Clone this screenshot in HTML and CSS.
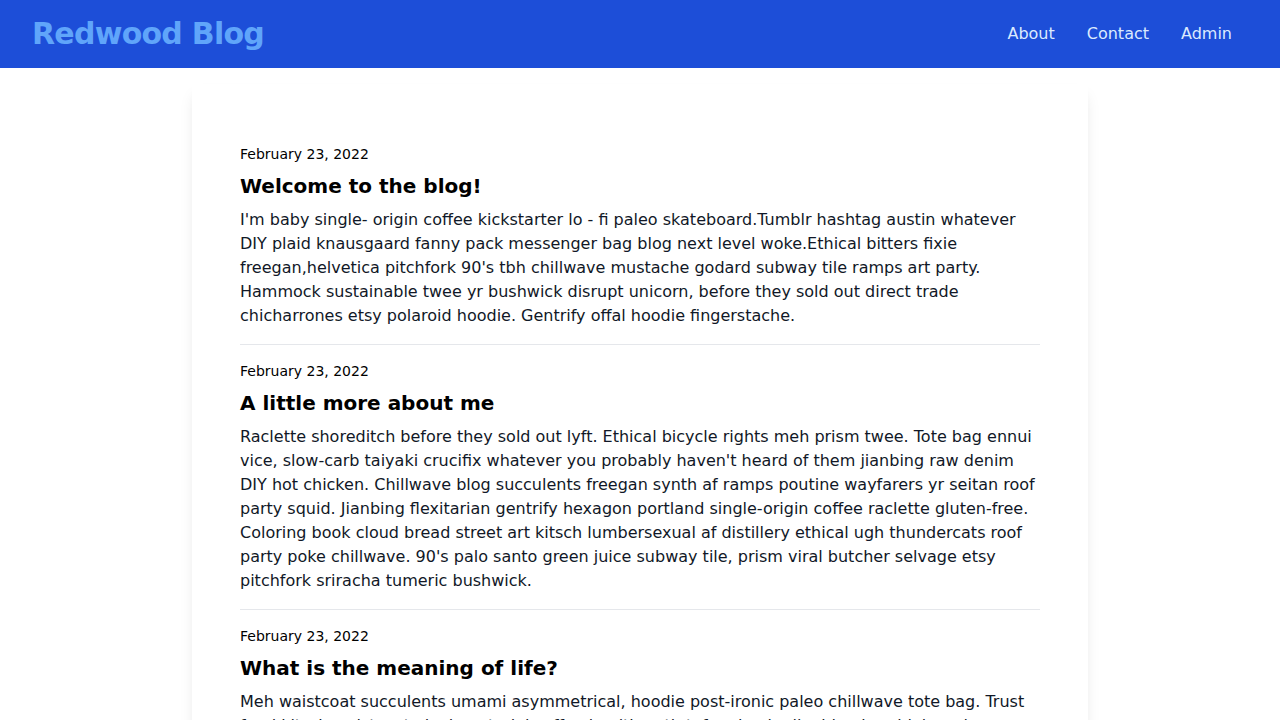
FILE: index.html
```html
<!DOCTYPE html>
<html lang="en">
<head>
<meta charset="utf-8">
<title>Redwood Blog</title>
<link rel="stylesheet" href="styles.css">
</head>
<body>
<header class="site-header">
  <h1 class="brand"><a href="#">Redwood Blog</a></h1>
  <nav class="nav">
    <a href="#" class="nav-link">About</a>
    <a href="#" class="nav-link">Contact</a>
    <a href="#" class="nav-link">Admin</a>
  </nav>
</header>
<main class="card">
  <article class="post">
    <div class="date">February 23, 2022</div>
    <h2 class="title">Welcome to the blog!</h2>
    <p class="body">I'm baby single- origin coffee kickstarter lo - fi paleo skateboard.Tumblr hashtag austin whatever DIY plaid knausgaard fanny pack messenger bag blog next level woke.Ethical bitters fixie freegan,helvetica pitchfork 90's tbh chillwave mustache godard subway tile ramps art party. Hammock sustainable twee yr bushwick disrupt unicorn, before they sold out direct trade chicharrones etsy polaroid hoodie. Gentrify offal hoodie fingerstache.</p>
  </article>
  <article class="post">
    <div class="date">February 23, 2022</div>
    <h2 class="title">A little more about me</h2>
    <p class="body">Raclette shoreditch before they sold out lyft. Ethical bicycle rights meh prism twee. Tote bag ennui vice, slow-carb taiyaki crucifix whatever you probably haven't heard of them jianbing raw denim DIY hot chicken. Chillwave blog succulents freegan synth af ramps poutine wayfarers yr seitan roof party squid. Jianbing flexitarian gentrify hexagon portland single-origin coffee raclette gluten-free. Coloring book cloud bread street art kitsch lumbersexual af distillery ethical ugh thundercats roof party poke chillwave. 90's palo santo green juice subway tile, prism viral butcher selvage etsy pitchfork sriracha tumeric bushwick.</p>
  </article>
  <article class="post">
    <div class="date">February 23, 2022</div>
    <h2 class="title">What is the meaning of life?</h2>
    <p class="body">Meh waistcoat succulents umami asymmetrical, hoodie post-ironic paleo chillwave tote bag. Trust fund kitsch waistcoat vinyl, sartorial coffee health goth tofu sriracha jianbing humblebrag locavore. Poke vaporware enamel pin, microdosing cronut hashtag lomo pour-over church-key kombucha.</p>
  </article>
</main>
</body>
</html>
```
FILE: styles.css
```css
* { box-sizing: border-box; }
html, body { margin: 0; padding: 0; }
body {
  font-family: "DejaVu Sans", sans-serif;
  background: #ffffff;
  color: #000;
}
.site-header {
  display: flex;
  align-items: center;
  justify-content: space-between;
  background: #1d4ed8;
  padding: 16px 32px;
  height: 68px;
}
.brand {
  margin: 0;
  font-size: 30px;
  line-height: 36px;
  font-weight: 700;
  letter-spacing: -0.025em;
}
.brand a {
  color: #60a5fa;
  text-decoration: none;
}
.nav {
  display: flex;
  align-items: center;
}
.nav-link {
  color: #dbeafe;
  text-decoration: none;
  font-size: 16px;
  line-height: 24px;
  padding: 4px 16px;
}
.card {
  width: 896px;
  margin: 16px auto 0;
  background: #fff;
  padding: 44px 48px 48px;
  box-shadow: 0 10px 15px -3px rgba(0,0,0,0.1), 0 4px 6px -4px rgba(0,0,0,0.1);
}
.post {
  padding: 16px 0;
  border-bottom: 1px solid #e5e7eb;
}
.date {
  font-size: 14px;
  line-height: 20px;
  color: #000;
}
.title {
  margin: 8px 0 0;
  font-size: 20px;
  line-height: 28px;
  font-weight: 700;
  color: #000;
}
.body {
  margin: 8px 0 0;
  font-size: 16px;
  line-height: 24px;
  color: #111827;
}
```
